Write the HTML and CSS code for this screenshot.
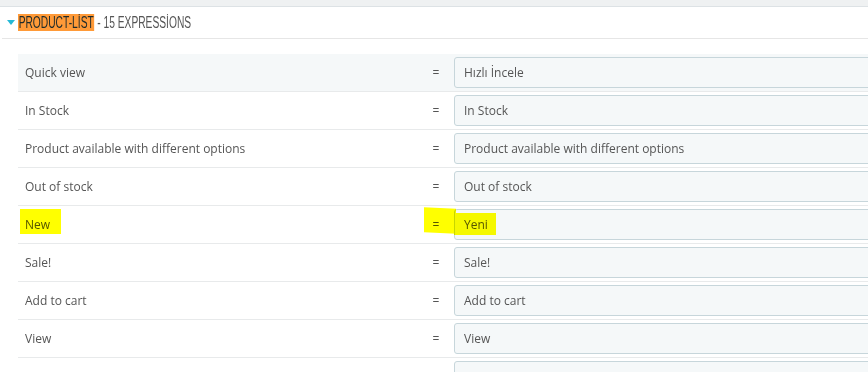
FILE: index.html
```html
<!DOCTYPE html>
<html lang="en">
<head>
  <meta charset="UTF-8" />
  <title>Translations - Product list</title>
  <link rel="stylesheet" href="styles.css">
</head>
<body>
  <div class="topbar"></div>
  <div class="panel">
    <div class="panel-heading">
      <span class="caret"></span>
      <span class="title"><span class="hl-orange">PRODUCT-LİST</span> - 15 EXPRESSİONS</span>
    </div>

    <div class="expr-list">
      <div class="expr-row active">
        <div class="key">Quick view</div>
        <div class="eq">=</div>
        <div class="val"><input type="text" value="Hızlı İncele"></div>
      </div>
      <div class="expr-row">
        <div class="key">In Stock</div>
        <div class="eq">=</div>
        <div class="val"><input type="text" value="In Stock"></div>
      </div>
      <div class="expr-row">
        <div class="key">Product available with different options</div>
        <div class="eq">=</div>
        <div class="val"><input type="text" value="Product available with different options"></div>
      </div>
      <div class="expr-row">
        <div class="key">Out of stock</div>
        <div class="eq">=</div>
        <div class="val"><input type="text" value="Out of stock"></div>
      </div>
      <div class="expr-row">
        <div class="key">New</div>
        <div class="eq">=</div>
        <div class="val"><input type="text" value="Yeni"></div>
        <!-- highlighter marks -->
        <span class="marker mark-key"></span>
        <span class="marker mark-eq"></span>
        <span class="marker mark-val"></span>
      </div>
      <div class="expr-row">
        <div class="key">Sale!</div>
        <div class="eq">=</div>
        <div class="val"><input type="text" value="Sale!"></div>
      </div>
      <div class="expr-row">
        <div class="key">Add to cart</div>
        <div class="eq">=</div>
        <div class="val"><input type="text" value="Add to cart"></div>
      </div>
      <div class="expr-row">
        <div class="key">View</div>
        <div class="eq">=</div>
        <div class="val"><input type="text" value="View"></div>
      </div>
      <div class="expr-row">
        <div class="key"></div>
        <div class="eq"></div>
        <div class="val"><input type="text" value=""></div>
      </div>
    </div>
  </div>
</body>
</html>
```

FILE: styles.css
```css
html, body { margin: 0; padding: 0; }
body {
  width: 868px;
  height: 372px;
  overflow: hidden;
  background: #fff;
  font-family: "Open Sans", "Liberation Sans", sans-serif;
  font-size: 12px;
  color: #555;
}

.topbar { height: 6px; background: #eff1f2; border-bottom: 1px solid #dde2e5; }

.panel { width: 1100px; }

.panel-heading {
  height: 31px;
  margin-left: 2px;
  padding-left: 5px;
  display: flex;
  align-items: center;
  border-bottom: 1px solid #e6e6e6;
}
.caret {
  width: 0;
  height: 0;
  margin-right: 3px;
  border-left: 4px solid transparent;
  border-right: 4px solid transparent;
  border-top: 5px solid #25b9d7;
}
.title {
  display: inline-block;
  font-family: "Liberation Sans", Arial, sans-serif;
  font-size: 16px;
  line-height: 19px;
  color: #555;
  white-space: nowrap;
  transform: scaleX(0.64);
  transform-origin: left center;
}
.hl-orange {
  background: #ff9a38;
  color: #1e2a2a;
  padding: 0 1px;
}

.expr-list { margin: 15px 0 0 18px; }

.expr-row {
  position: relative;
  display: grid;
  grid-template-columns: 400px 36px 1fr;
  align-items: center;
  height: 37px;
  border-bottom: 1px solid #e8eaeb;
}
.expr-row.active { background: #f5f8f9; }

.key { padding-left: 7px; }
.eq { text-align: center; }

.val input {
  display: block;
  box-sizing: border-box;
  width: 100%;
  height: 31px;
  padding: 0 9px;
  border: 1px solid #c7d6db;
  border-radius: 3px;
  background: #f5f8f9;
  font-family: "Open Sans", "Liberation Sans", sans-serif;
  font-size: 12px;
  color: #555;
}

.marker {
  position: absolute;
  background: #ffff00;
  mix-blend-mode: multiply;
}
.mark-key { left: 2px; top: 3px; width: 41px; height: 25px; }
.mark-eq { left: 406px; top: 2px; width: 32px; height: 25px; transform: skewY(3deg); }
.mark-val { left: 436px; top: 7px; width: 42px; height: 22px; }
```
